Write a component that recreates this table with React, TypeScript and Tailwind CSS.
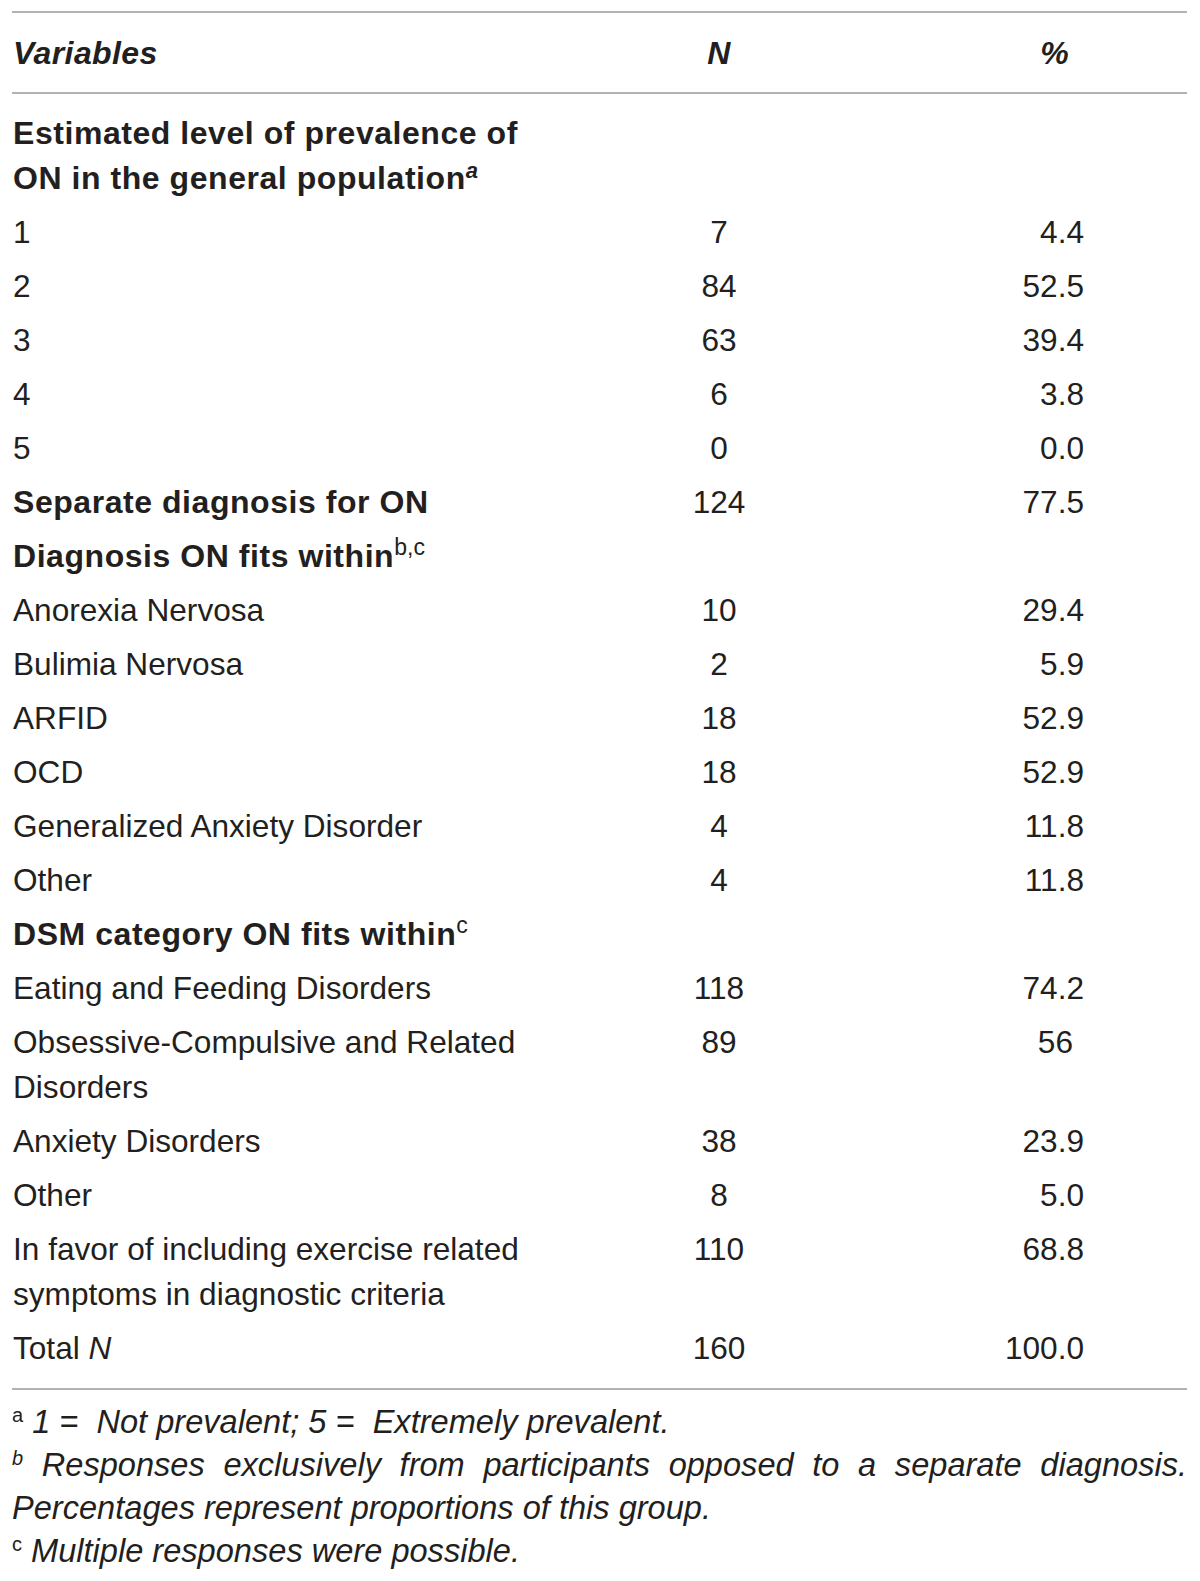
import React from "react";

type Row = {
  label: React.ReactNode;
  n?: string;
  p?: string;
  bold?: boolean;
  pCenter?: boolean;
};

const rows: Row[] = [
  {
    label: (
      <>
        Estimated level of prevalence of
        <br />
        ON in the general population<sup className="italic font-bold text-[22px] leading-none">a</sup>
      </>
    ),
    bold: true,
  },
  { label: "1", n: "7", p: "4.4" },
  { label: "2", n: "84", p: "52.5" },
  { label: "3", n: "63", p: "39.4" },
  { label: "4", n: "6", p: "3.8" },
  { label: "5", n: "0", p: "0.0" },
  { label: "Separate diagnosis for ON", n: "124", p: "77.5", bold: true },
  {
    label: (
      <>
        Diagnosis ON fits within<sup className="font-normal tracking-normal text-[23px] leading-none">b,c</sup>
      </>
    ),
    bold: true,
  },
  { label: "Anorexia Nervosa", n: "10", p: "29.4" },
  { label: "Bulimia Nervosa", n: "2", p: "5.9" },
  { label: "ARFID", n: "18", p: "52.9" },
  { label: "OCD", n: "18", p: "52.9" },
  { label: "Generalized Anxiety Disorder", n: "4", p: "11.8" },
  { label: "Other", n: "4", p: "11.8" },
  {
    label: (
      <>
        DSM category ON fits within<sup className="font-normal tracking-normal text-[23px] leading-none">c</sup>
      </>
    ),
    bold: true,
  },
  { label: "Eating and Feeding Disorders", n: "118", p: "74.2" },
  {
    label: (
      <>
        Obsessive-Compulsive and Related
        <br />
        Disorders
      </>
    ),
    n: "89",
    p: "56",
    pCenter: true,
  },
  { label: "Anxiety Disorders", n: "38", p: "23.9" },
  { label: "Other", n: "8", p: "5.0" },
  {
    label: (
      <>
        In favor of including exercise related
        <br />
        symptoms in diagnostic criteria
      </>
    ),
    n: "110",
    p: "68.8",
  },
  {
    label: (
      <>
        Total <span className="italic">N</span>
      </>
    ),
    n: "160",
    p: "100.0",
  },
];

export default function App() {
  return (
    <div
      className="bg-white w-[1200px] min-h-[1581px] text-[#231f20]"
      style={{ fontFamily: '"Liberation Sans", Arial, sans-serif' }}
    >
      <div className="ml-[12px] w-[1175px] pt-[11px]">
        {/* Header */}
        <div className="border-t-2 border-b-2 border-[#b3b3b3] h-[83px] grid grid-cols-[560px_294px_321px] items-center text-[32px] font-bold italic tracking-[0.4px]">
          <div className="pl-[1px]">Variables</div>
          <div className="text-center">N</div>
          <div className="text-right pr-[118px]">%</div>
        </div>

        {/* Body */}
        <div className="pt-[12px] pb-[13px] border-b-2 border-[#b3b3b3]">
          {rows.map((r, i) => (
            <div
              key={i}
              className="grid grid-cols-[560px_294px_321px] py-[4.5px] leading-[45px] text-[31.6px]"
            >
              <div
                className={
                  r.bold
                    ? "pl-[1px] font-bold text-[32px] tracking-[0.55px]"
                    : "pl-[1px]"
                }
              >
                {r.label}
              </div>
              <div className="text-center">{r.n ?? ""}</div>
              <div className={r.pCenter ? "text-right pr-[114px]" : "text-right pr-[103px]"}>
                {r.p ?? ""}
              </div>
            </div>
          ))}
        </div>

        {/* Footnotes */}
        <div className="pt-[10px] text-[32.6px] leading-[43px] italic">
          <p>
            <sup className="not-italic text-[20px] leading-none top-[-11px]">a</sup> 1 = &nbsp;Not prevalent; 5 = &nbsp;Extremely prevalent.
          </p>
          <p className="text-justify">
            <sup className="text-[20px] leading-none top-[-11px]">b</sup> Responses exclusively from participants opposed to a separate
            diagnosis. Percentages represent proportions of this group.
          </p>
          <p>
            <sup className="not-italic text-[20px] leading-none top-[-11px]">c</sup> Multiple responses were possible.
          </p>
        </div>
      </div>
    </div>
  );
}
